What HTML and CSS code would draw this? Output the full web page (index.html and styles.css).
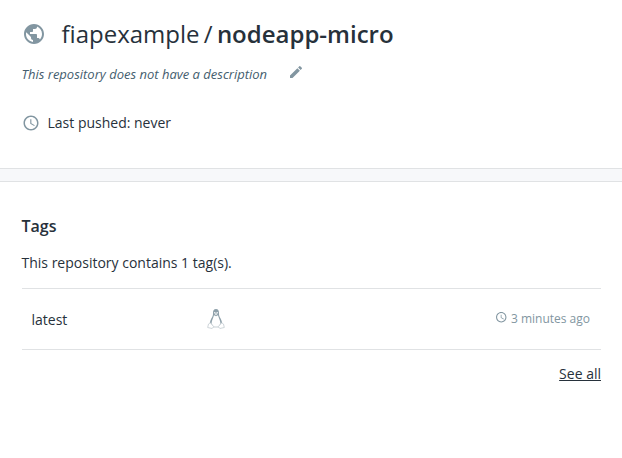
FILE: index.html
```html
<!DOCTYPE html>
<html lang="en">
<head>
<meta charset="utf-8">
<title>nodeapp-micro</title>
<link rel="stylesheet" href="styles.css">
</head>
<body>
<header class="repo">
  <h1 class="repo-name">
    <svg class="globe" viewBox="0 0 24 24"><path d="M12 2C6.480 2 2 6.480 2 12s4.480 10 10 10 10-4.480 10-10S17.520 2 12 2zm-1 17.930c-3.950-.490-7-3.850-7-7.930 0-.620.080-1.210.210-1.790L9 15v1c0 1.100.900 2 2 2v1.930zm6.900-2.540c-.260-.810-1-1.390-1.900-1.390h-1v-3c0-.550-.450-1-1-1H8v-2h2c.550 0 1-.450 1-1V7h2c1.100 0 2-.900 2-2v-.410c2.930 1.190 5 4.060 5 7.410 0 2.080-.800 3.970-2.100 5.390z"/></svg>
    <span class="owner">fiapexample</span><span class="slash">/</span><strong>nodeapp-micro</strong>
  </h1>
  <div class="description">
    <em>This repository does not have a description</em>
    <svg class="pencil" viewBox="0 0 24 24"><path d="M3 17.250V21h3.750L17.810 9.940l-3.750-3.750L3 17.250zM20.710 7.040a1 1 0 0 0 0-1.410l-2.340-2.340a1 1 0 0 0-1.410 0l-1.830 1.830 3.750 3.750 1.830-1.830z"/></svg>
  </div>
  <div class="pushed">
    <svg class="clock" viewBox="0 0 24 24"><path d="M11.990 2C6.470 2 2 6.480 2 12s4.470 10 9.990 10C17.520 22 22 17.520 22 12S17.520 2 11.990 2zM12 20c-4.420 0-8-3.580-8-8s3.580-8 8-8 8 3.580 8 8-3.580 8-8 8zm.5-13H11v6l5.250 3.150.750-1.230-4.500-2.670z"/></svg>
    <span>Last pushed: never</span>
  </div>
</header>
<div class="divider"></div>
<main class="tags">
  <h2>Tags</h2>
  <p>This repository contains 1 tag(s).</p>
  <div class="tag-row">
    <span class="tag-name">latest</span>
    <svg class="linux" viewBox="0 0 18 22"><path class="coat" d="M9 1C6.700 1 5.900 2.700 6 5c.1 2.500-.5 3.600-1.700 5.500C3.200 12.500 3 14 2.800 16l3 3.200h6.400l3-3.200c-.2-2-.5-3.500-1.600-5.500C12.500 8.500 11.900 7.500 12 5c.1-2.300-.7-4-3-4z"/><path class="belly" d="M7 7.200C6.300 10 4.800 12 4.500 15.500l2 3.200h5l2-3.200C13.200 12 11.700 10 11 7.200L9 8.200z"/><path class="feet" d="M3.300 14.800 1.500 16l-.8 3.500 4.500 1 1.500-2zM14.700 14.800l1.800 1.200.8 3.500-4.500 1-1.500-2z"/><path class="face" d="M7 4h1.500v1H7zM9.500 4H11v1H9.500zM7 5.300h4L9 7.500z"/></svg>
    <span class="age"><svg class="clock" viewBox="0 0 24 24"><path d="M11.990 2C6.470 2 2 6.480 2 12s4.470 10 9.990 10C17.520 22 22 17.520 22 12S17.520 2 11.990 2zM12 20c-4.420 0-8-3.580-8-8s3.580-8 8-8 8 3.580 8 8-3.580 8-8 8zm.5-13H11v6l5.250 3.150.750-1.230-4.500-2.670z"/></svg><span>3 minutes ago</span></span>
  </div>
  <a class="see-all" href="#">See all</a>
</main>
</body>
</html>
```

FILE: styles.css
```css
* { box-sizing: border-box; }
body { margin: 0; background: #fff; color: #27313b; font: 14px/20px "Open Sans", sans-serif; }
svg { display: block; flex: none; fill: #8296a1; }
.repo { height: 168px; padding: 16px 21.5px 0; }
.repo-name { display: flex; align-items: center; height: 36px; margin: 0; font-size: 24px; font-weight: 400; line-height: 36px; }
.globe { width: 24px; height: 24px; margin-right: 16px; }
.slash { margin: 0 4.3px; }
strong { font-weight: 600; }
.description { display: flex; align-items: center; height: 20px; margin-top: 12px; color: #445d6e; font-size: 13px; }
.pencil { width: 16px; height: 16px; margin: -4px 0 0 20.5px; }
.pushed { display: flex; align-items: center; margin-top: 29px; }
.pushed .clock { width: 18px; height: 18px; margin-right: 8px; }
.divider { height: 14px; background: #f7f8fa; border: solid #e0e2e4; border-width: 1px 0; }
.tags { display: flex; flex-direction: column; padding: 34px 21px 0 21.5px; }
h2 { margin: 0; font-size: 16px; font-weight: 600; line-height: 20px; }
p { margin: 17px 0 15px; }
.tag-row { display: grid; grid-template-columns: 175.5px 1fr auto; align-items: center; height: 62px; padding: 0 11px 0 10px; border: solid #e0e2e4; border-width: 1px 0; }
.tag-name { padding-top: 2px; }
.linux { width: 18px; height: 22px; }
.linux .coat { fill: #8ea0aa; }
.linux .belly { fill: #fff; }
.linux .feet { fill: #fff; stroke: #c3cbd0; stroke-width: .8; }
.linux .face { fill: #e4e9eb; }
.age { display: flex; align-items: center; gap: 3.5px; color: #8296a1; font-size: 12px; }
.age .clock { width: 12.5px; height: 12.5px; margin-top: -4px; }
.see-all { align-self: flex-end; margin-top: 14px; color: inherit; }
```
